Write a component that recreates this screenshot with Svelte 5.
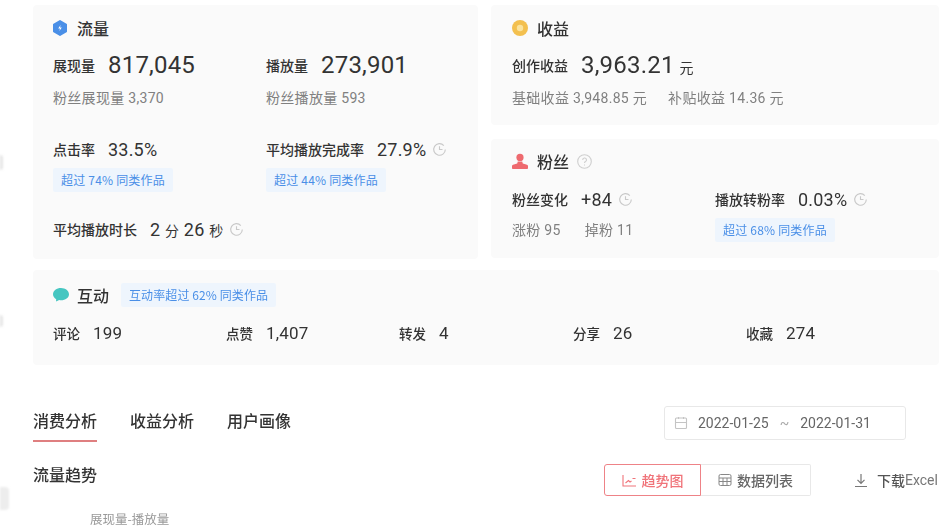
<script lang="ts">
	const interactions = [
		{ label: '评论', value: '199' },
		{ label: '点赞', value: '1,407' },
		{ label: '转发', value: '4' },
		{ label: '分享', value: '26' },
		{ label: '收藏', value: '274' }
	];
	const tabs = ['消费分析', '收益分析', '用户画像'];
</script>

{#snippet clock()}
	<svg class="clock" width="15" height="15" viewBox="0 0 16 16" fill="none" stroke="#c9c9c9" stroke-width="1.2">
		<path d="M14.2 8a6.2 6.2 0 1 1-1.6-4.2" />
		<path d="M8 4.6V8h3.2" />
	</svg>
{/snippet}

<div class="edge edge-a"></div>
<div class="edge edge-b"></div>
<div class="edge edge-c"></div>

<div class="page">
	<div class="cards">
		<section class="card traffic">
			<h3 class="card-title">
				<svg width="14" height="16" viewBox="0 0 14 16">
					<path d="M7 1 13 4.500V11.500L7 15 1 11.500V4.500Z" fill="#4a8fe7" stroke="#4a8fe7" stroke-width="2" stroke-linejoin="round" />
					<path d="M7.6 5 5.2 8.4H7L6.4 11 8.8 7.6H7Z" fill="#fff" />
				</svg>
				<span>流量</span>
			</h3>
			<div class="two-col big-row">
				<div>
					<p class="stat"><span class="label">展现量</span><span class="num big">817,045</span></p>
					<p class="sub">粉丝展现量 3,370</p>
				</div>
				<div>
					<p class="stat"><span class="label">播放量</span><span class="num big">273,901</span></p>
					<p class="sub">粉丝播放量 593</p>
				</div>
			</div>
			<div class="two-col rate-row">
				<div>
					<p class="stat"><span class="label">点击率</span><span class="num mid">33.5%</span></p>
					<span class="badge">超过 74% 同类作品</span>
				</div>
				<div>
					<p class="stat"><span class="label">平均播放完成率</span><span class="num mid">27.9%</span>{@render clock()}</p>
					<span class="badge">超过 44% 同类作品</span>
				</div>
			</div>
			<p class="stat duration">
				<span class="label">平均播放时长</span>
				<span class="num mid">2 <small>分</small> 26 <small>秒</small></span>
				{@render clock()}
			</p>
		</section>

		<section class="card income">
			<h3 class="card-title">
				<svg width="16" height="16" viewBox="0 0 16 16">
					<circle cx="8" cy="8" r="8" fill="#f3c04f" />
					<circle cx="8" cy="8" r="3.2" fill="#fbe39c" />
				</svg>
				<span>收益</span>
			</h3>
			<p class="stat income-stat">
				<span class="label">创作收益</span><span class="num big">3,963.21</span><span class="unit">元</span>
			</p>
			<p class="sub income-sub"><span>基础收益 3,948.85 元</span><span>补贴收益 14.36 元</span></p>
		</section>

		<section class="card fans">
			<h3 class="card-title">
				<svg width="16" height="16" viewBox="0 0 16 16" fill="#ee6a6f">
					<circle cx="8" cy="4.4" r="3.6" />
					<path d="M5.8 8.6h4.4l.6 2 4.2 1.2c.6.2 1 .7 1 1.3V15c0 .5-.4 1-1 1H1c-.6 0-1-.5-1-1v-1.900c0-.6.4-1.100 1-1.300l4.200-1.200Z" />
				</svg>
				<span>粉丝</span>
				<svg class="help" width="15" height="15" viewBox="0 0 15 15" fill="none" stroke="#cfcfcf" stroke-width="1.100">
					<circle cx="7.500" cy="7.500" r="6.800" />
					<path d="M5.700 6a1.900 1.900 0 1 1 2.800 1.600c-.7.400-1 .8-1 1.500" />
					<path d="M7.500 10.500v1" />
				</svg>
			</h3>
			<div class="fans-grid">
				<div>
					<p class="stat"><span class="label">粉丝变化</span><span class="num mid">+84</span>{@render clock()}</p>
					<p class="sub fans-sub"><span>涨粉 95</span><span>掉粉 11</span></p>
				</div>
				<div>
					<p class="stat"><span class="label">播放转粉率</span><span class="num mid">0.03%</span>{@render clock()}</p>
					<span class="badge">超过 68% 同类作品</span>
				</div>
			</div>
		</section>

		<section class="card interact">
			<h3 class="card-title">
				<svg width="16" height="14" viewBox="0 0 16 14">
					<path d="M8 0C3.600 0 0 2.700 0 6.200c0 2.100 1.300 3.900 3.200 5L3 13.600l3.200-1.500c.6.100 1.200.2 1.800.2 4.400 0 8-2.700 8-6.100S12.400 0 8 0Z" fill="#45c6c1" />
				</svg>
				<span>互动</span>
				<span class="badge title-badge">互动率超过 62% 同类作品</span>
			</h3>
			<div class="interact-row">
				{#each interactions as item}
					<p class="stat"><span class="label small">{item.label}</span><span class="num count">{item.value}</span></p>
				{/each}
			</div>
		</section>
	</div>

	<div class="tabs-row">
		<nav class="tabs">
			{#each tabs as tab, i}
				<span class="tab" class:active={i === 0}>{tab}</span>
			{/each}
		</nav>
		<div class="date-range">
			<svg width="14" height="14" viewBox="0 0 14 14" fill="none" stroke="#c4c4c4" stroke-width="1.100">
				<rect x="1.500" y="2" width="11" height="10.500" rx="1" />
				<path d="M1.500 6.500h11M4.500 1v2M9.500 1v2" />
			</svg>
			<span>2022-01-25</span>
			<span class="tilde">~</span>
			<span>2022-01-31</span>
		</div>
	</div>

	<div class="trend-row">
		<h4 class="trend-title">流量趋势</h4>
		<div class="toggle">
			<button class="toggle-btn on">
				<svg width="15" height="13" viewBox="0 0 15 13" fill="none" stroke="#f0747a" stroke-width="1.100">
					<path d="M1 1v11h13" />
					<path d="M3.500 9 6.500 6.500 8 8l1.500-1M10.500 4.500h3" />
				</svg>
				趋势图
			</button>
			<button class="toggle-btn">
				<svg width="14" height="14" viewBox="0 0 14 14" fill="none" stroke="#888" stroke-width="1">
					<rect x="1" y="1.500" width="12" height="11" rx="1.500" />
					<path d="M1 5h12M1 8.500h12M5 5v7.500M9 5v7.500" />
				</svg>
				数据列表
			</button>
		</div>
		<div class="download">
			<svg width="14" height="15" viewBox="0 0 14 15" fill="none" stroke="#777" stroke-width="1.200">
				<path d="M7 1v9M3.500 6.800 7 10.300l3.500-3.500M1 13.500h12" />
			</svg>
			<span class="dl-cn">下载</span><span class="dl-en">Excel</span>
		</div>
	</div>

	<p class="legend">展现量-播放量</p>
</div>

<style>
	:global(body) {
		margin: 0;
		background: #fff;
		overflow: hidden;
	}

	.page {
		width: 906px;
		height: 523px;
		padding: 5px 0 0 33px;
		font-family: Roboto, "Noto Sans CJK SC", sans-serif;
		color: #333;
		filter: blur(0.6px);
		overflow: hidden;
	}

	.edge {
		position: absolute;
		left: 0;
		width: 3px;
		background: #e6e6e6;
		filter: blur(1px);
	}

	.edge-a { top: 155px; height: 15px; border-radius: 0 8px 8px 0; }
	.edge-b { top: 315px; height: 12px; border-radius: 0 8px 8px 0; }
	.edge-c { top: 487px; height: 23px; width: 9px; border-radius: 0 4px 4px 0; background: #ededed; }

	.cards {
		display: grid;
		grid-template-columns: 445px 448px;
		grid-template-rows: 120px 120px 94px;
		column-gap: 13px;
		row-gap: 13px;
	}

	.card {
		background: #fafafa;
		border-radius: 4px;
		box-sizing: border-box;
		padding: 13px 20px 0;
	}

	.traffic {
		grid-row: 1 / 3;
		height: 254px;
	}

	.income { padding-left: 21px; }
	.fans { padding: 12px 0 0 21px; margin-top: 1px; height: 119px; }

	.interact {
		grid-column: 1 / 3;
		margin-top: -1px;
		padding-top: 15px;
	}

	.card-title {
		display: flex;
		align-items: center;
		gap: 10px;
		height: 20px;
		margin: 0;
		font-family: "Noto Sans CJK SC", sans-serif;
		font-size: 16px;
		font-weight: 500;
		color: #333;
	}

	.income .card-title,
	.fans .card-title { gap: 9px; }

	.interact .card-title { gap: 8px; }

	.help { margin-left: -1px; }

	p { margin: 0; }

	.two-col {
		display: grid;
		grid-template-columns: 213px 1fr;
	}

	.big-row { margin-top: 12px; }
	.rate-row { margin-top: 26px; }

	.stat {
		display: flex;
		align-items: center;
		height: 30px;
	}

	.label {
		font-family: "Noto Sans CJK SC", sans-serif;
		font-size: 14px;
		font-weight: 500;
		color: #333;
		margin-right: 13px;
	}

	.label.small { font-size: 13.500px; }

	.num {
		color: #333;
		letter-spacing: 0.2px;
	}

	.big { font-size: 24px; }
	.mid { font-size: 18px; }
	.count { font-size: 17px; }

	.num small {
		font-family: "Noto Sans CJK SC", sans-serif;
		font-size: 14px;
	}

	.clock { margin-left: 6px; }

	.sub {
		font-family: Roboto, "Noto Sans CJK SC", sans-serif;
		font-size: 14px;
		letter-spacing: 0.3px;
		color: #808080;
		margin-top: 8px;
		line-height: 20px;
	}

	.badge {
		display: block;
		width: fit-content;
		margin-top: 4px;
		font-family: "Noto Sans CJK SC", Roboto, sans-serif;
		font-size: 12px;
		letter-spacing: 0.2px;
		font-weight: 400;
		line-height: 24px;
		height: 24px;
		padding: 0 8px;
		color: #4a8fe7;
		background: #eef5fd;
		border-radius: 2px;
	}

	.duration {
		margin-top: 22px;
	}

	.income-stat { margin-top: 12px; }

	.unit {
		font-family: "Noto Sans CJK SC", sans-serif;
		font-size: 14px;
		margin-left: 5px;
		margin-top: 3px;
	}

	.income-sub {
		display: flex;
		gap: 21px;
		margin-top: 8px;
	}

	.fans-grid {
		display: grid;
		grid-template-columns: 203px 1fr;
		margin-top: 13px;
	}

	.fans-sub {
		display: flex;
		gap: 24px;
		margin-top: 6px;
	}

	.title-badge {
		margin: 0 0 0 4px;
		letter-spacing: 0.1px;
	}

	.interact-row {
		display: grid;
		grid-template-columns: 173px 173px 174px 173px 1fr;
		margin-top: 13px;
	}

	.tabs-row {
		display: flex;
		justify-content: space-between;
		align-items: flex-start;
		width: 873px;
		margin-top: 41px;
	}

	.tabs {
		display: flex;
		gap: 33px;
	}

	.tab {
		font-family: "Noto Sans CJK SC", sans-serif;
		font-size: 16px;
		font-weight: 500;
		color: #333;
		line-height: 28px;
		padding-bottom: 6px;
		border-bottom: 2px solid transparent;
	}

	.tab.active {
		border-bottom-color: #df7f80;
	}

	.date-range {
		display: flex;
		align-items: center;
		width: 242px;
		height: 34px;
		box-sizing: border-box;
		padding-left: 9px;
		border: 1px solid #e8e8e8;
		border-radius: 3px;
		font-size: 14px;
		color: #666;
	}

	.date-range svg { margin-right: 10px; }
	.tilde { margin: 0 11px; color: #aaa; }

	.trend-row {
		display: flex;
		align-items: center;
		width: 906px;
		height: 32px;
		margin-top: 22px;
	}

	.trend-title {
		font-family: "Noto Sans CJK SC", sans-serif;
		font-size: 16px;
		font-weight: 500;
		color: #333;
		margin: 0 0 12px;
		width: 571px;
	}

	.toggle { display: flex; }

	.toggle-btn {
		display: flex;
		align-items: center;
		justify-content: center;
		gap: 5px;
		height: 32px;
		box-sizing: border-box;
		width: 110px;
		padding: 0;
		background: #fff;
		border: 1px solid #e8e8e8;
		border-left: none;
		font-family: "Noto Sans CJK SC", sans-serif;
		font-size: 14px;
		font-weight: 500;
		color: #666;
		border-radius: 0 2px 2px 0;
	}

	.toggle-btn.on {
		width: 97px;
		border: 1px solid #ee8287;
		border-radius: 3px 0 0 3px;
		color: #f0747a;
	}

	.download {
		display: flex;
		align-items: center;
		margin-left: 43px;
		white-space: nowrap;
		font-size: 14px;
		color: #777;
	}

	.dl-cn {
		font-family: "Noto Sans CJK SC", sans-serif;
		font-weight: 500;
		color: #555;
		margin-left: 9px;
	}

	.legend {
		font-family: "Noto Sans CJK SC", sans-serif;
		font-size: 12.500px;
		line-height: 16px;
		color: #999;
		margin: 15px 0 0 57px;
	}
</style>
